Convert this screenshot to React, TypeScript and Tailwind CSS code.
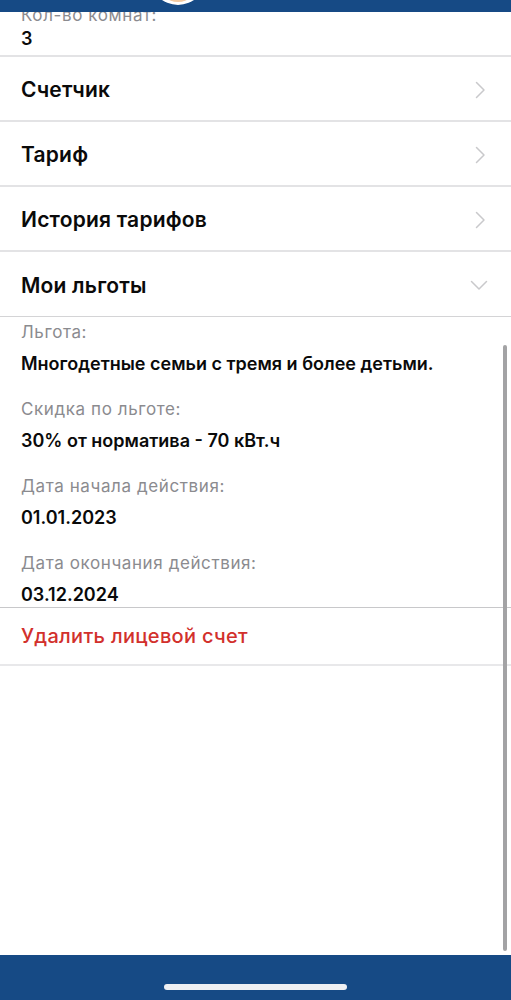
import React from "react";

const font = { fontFamily: "Inter, 'Noto Sans', 'Liberation Sans', sans-serif" };

function ChevronRight() {
  return (
    <svg width="12" height="18" viewBox="0 0 12 18" fill="none">
      <path d="M2.5 1.5 L10 9 L2.5 16.5" stroke="#c9c9cb" strokeWidth="1.5" strokeLinecap="round" strokeLinejoin="round" />
    </svg>
  );
}

function ChevronDown() {
  return (
    <svg width="18" height="11" viewBox="0 0 18 11" fill="none">
      <path d="M1.5 1.5 L9 9 L16.5 1.5" stroke="#c9c9cb" strokeWidth="1.5" strokeLinecap="round" strokeLinejoin="round" />
    </svg>
  );
}

function Row({ title }: { title: string }) {
  return (
    <div className="flex h-[65px] items-center justify-between border-b-2 border-[#e3e3e5] pl-[21px] pr-[25px] pt-[2px]">
      <span className="text-[21px] font-semibold leading-[26px] tracking-[0.2px] text-[#0a0a0a]">{title}</span>
      <ChevronRight />
    </div>
  );
}

function Field({ label, value }: { label: string; value: string }) {
  return (
    <div className="flex flex-col">
      <span className="text-[17px] leading-[20px] tracking-[0.6px] text-[#8b8b8f]">{label}</span>
      <span className="mt-[10px] text-[18px] font-semibold leading-[24px] text-[#0a0a0a]">{value}</span>
    </div>
  );
}

export default function App() {
  return (
    <div className="relative flex h-[1000px] w-full flex-col overflow-hidden bg-white" style={font}>
      <div className="relative z-10 h-[12px] shrink-0 bg-[#164a85]">
        <div className="absolute left-[150px] top-[-51px] flex h-[56px] w-[56px] items-end justify-center rounded-full bg-white">
          <div className="mb-[3px] h-[40px] w-[40px] rounded-full bg-[#f3c9a0]" />
        </div>
      </div>

      <div className="relative flex-1 overflow-hidden">
        <div className="mt-[-7px] flex flex-col">
          <div className="flex flex-col border-b-2 border-[#e3e3e5] px-[21px] pb-[4px]">
            <span className="text-[17px] leading-[20px] tracking-[0.6px] text-[#8b8b8f]">Кол-во комнат:</span>
            <span className="mt-[2px] text-[18px] font-semibold leading-[24px] text-[#0a0a0a]">3</span>
          </div>
          <Row title="Счетчик" />
          <Row title="Тариф" />
          <Row title="История тарифов" />
          <div className="flex h-[65px] items-center justify-between border-b border-[#d4d4d6] pl-[21px] pr-[23px] pt-[3px]">
            <span className="text-[21px] font-semibold leading-[26px] tracking-[0.2px] text-[#0a0a0a]">Мои льготы</span>
            <ChevronDown />
          </div>
          <div className="flex flex-col gap-[23px] border-b border-[#c8c8ca] px-[21px] pt-[5px]">
            <Field label="Льгота:" value="Многодетные семьи с тремя и более детьми." />
            <Field label="Скидка по льготе:" value="30% от норматива - 70 кВт.ч" />
            <Field label="Дата начала действия:" value="01.01.2023" />
            <Field label="Дата окончания действия:" value="03.12.2024" />
          </div>
          <div className="flex h-[58px] items-center border-b-2 border-[#e8e8ea] px-[21px]">
            <span className="text-[20px] font-medium leading-[24px] tracking-[0.3px] text-[#d2302c]">Удалить лицевой счет</span>
          </div>
        </div>
        <div className="absolute right-[4px] top-[333px] h-[606px] w-[4px] rounded-full bg-[#a3a3a5]" />
      </div>

      <div className="flex h-[45px] shrink-0 items-end justify-center bg-[#164a85] pb-[10px]">
        <div className="h-[6px] w-[183px] rounded-full bg-[#eef0f3]" />
      </div>
    </div>
  );
}
